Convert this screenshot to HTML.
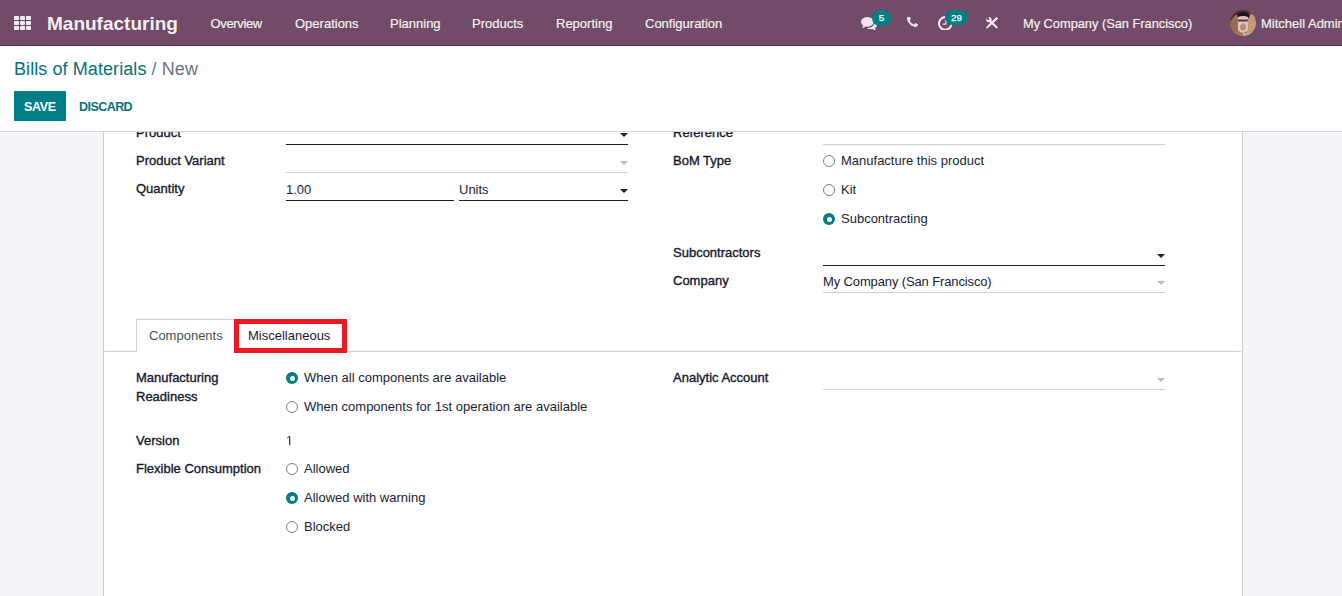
<!DOCTYPE html>
<html><head><meta charset="utf-8">
<style>
html,body{margin:0;padding:0;width:1342px;height:596px;overflow:hidden;background:#fff;}
body{position:relative;font-family:"Liberation Sans",sans-serif;font-size:13px;color:#1a1c34;}
.t{position:absolute;line-height:13px;white-space:nowrap;font-size:13px;}
.b{color:#15172e;font-weight:400;-webkit-text-stroke:0.35px currentColor;}
#nav{position:absolute;left:0;top:0;width:1342px;height:45px;background:#714b67;border-bottom:1px solid #4f2d46;}
#nav .t{color:#f3eff2;-webkit-text-stroke:0.2px #f3eff2;}
.badge{position:absolute;background:#017e84;color:#fff;font-weight:400;-webkit-text-stroke:0.25px #fff;font-size:9.8px;line-height:15px;text-align:center;border-radius:8px;}
#cp{position:absolute;left:0;top:46px;width:1342px;height:85px;background:#fff;border-bottom:1px solid #cfd1d6;}
#bg{position:absolute;left:0;top:132px;width:1342px;height:464px;background:#f4f5f9;}
#sheet{position:absolute;left:103px;top:132px;width:1138px;height:470px;background:#fff;border-left:1px solid #cbced4;border-right:1px solid #cbced4;}
.ul{position:absolute;height:1px;background:#1b1d2c;}
.ulg{position:absolute;height:1px;background:#d0d0d2;}
.caret{position:absolute;width:0;height:0;border-left:4px solid transparent;border-right:4px solid transparent;border-top:4px solid #1b1d2c;}
.caretg{border-top-color:#b9b9bb;}
.radio{position:absolute;width:10px;height:10px;border:1px solid #7a7f85;border-radius:50%;background:#fff;}
.radio.on{border:none;width:12px;height:12px;background:#017e84;}
.radio.on:after{content:"";position:absolute;left:3.5px;top:3.5px;width:5px;height:5px;border-radius:50%;background:#fff;}
</style></head>
<body>
<!-- NAVBAR -->
<div id="nav">
  <svg style="position:absolute;left:14px;top:16px" width="18" height="15" viewBox="0 0 18 15">
    <g fill="#f1ecf0">
      <rect x="0" y="0" width="5" height="4" rx="0.8"/><rect x="6" y="0" width="5" height="4" rx="0.8"/><rect x="12" y="0" width="5" height="4" rx="0.8"/>
      <rect x="0" y="5" width="5" height="4" rx="0.8"/><rect x="6" y="5" width="5" height="4" rx="0.8"/><rect x="12" y="5" width="5" height="4" rx="0.8"/>
      <rect x="0" y="10" width="5" height="4" rx="0.8"/><rect x="6" y="10" width="5" height="4" rx="0.8"/><rect x="12" y="10" width="5" height="4" rx="0.8"/>
    </g>
  </svg>
  <span class="t" style="left:47px;top:13.5px;font-size:19px;line-height:19px;font-weight:700;-webkit-text-stroke:0;">Manufacturing</span>
  <span class="t" style="left:210.5px;top:17px;letter-spacing:-0.35px;">Overview</span>
  <span class="t" style="left:295px;top:17px;">Operations</span>
  <span class="t" style="left:390px;top:17px;">Planning</span>
  <span class="t" style="left:472px;top:17px;">Products</span>
  <span class="t" style="left:556px;top:17px;">Reporting</span>
  <span class="t" style="left:645px;top:17px;">Configuration</span>

  <!-- chat icon -->
  <svg style="position:absolute;left:860.6px;top:16.7px" width="16.2" height="13.4" viewBox="0 256 1792 1408" preserveAspectRatio="none">
    <path fill="#ece7eb" d="M1408 768q0 139-94 257t-256.5 186.5-353.5 68.5q-86 0-176-16-124 88-278 128-36 9-86 16h-3q-11 0-20.5-8t-11.5-21q-1-3-1-6.5t.5-6.5 2-6l2.5-5 3.5-5.5 4-5 4.5-5 4-4.5q5-6 23-25t26-29.5 22.5-29 25-38.5 20.5-44q-124-72-195-177t-71-224q0-139 94-257t256.5-186.5 353.5-68.5 353.5 68.5 256.5 186.5 94 257zm384 256q0 120-71 224.5t-195 176.5q10 24 20.5 44t25 38.5 22.5 29 26 29.5 23 25q1 1 4 4.5t4.5 5 4 5 3.5 5.5l2.5 5 2 6 .5 6.5-1 6.5q-3 14-13 22t-22 7q-50-7-86-16-154-40-278-128-90 16-176 16-271 0-472-132 58 4 88 4 161 0 309-45t264-129q125-92 192-212t67-254q0-77-23-152 129 71 204 178t75 230z"/>
  </svg>
  <div class="badge" style="left:872px;top:10px;width:19px;height:16px;line-height:16px;">5</div>

  <!-- phone -->
  <svg id="phone" style="position:absolute;left:906.8px;top:17px" width="11" height="11" viewBox="0 256 1408 1408" preserveAspectRatio="none">
    <path fill="#ece7eb" d="M1408 1240q0 27-10 70.5t-21 68.5q-21 50-122 106-94 51-186 51-27 0-53-3.5t-57.5-12.5-47-14.5-55.5-20.5-49-18q-98-35-175-83-127-79-264-216t-216-264q-48-77-83-175-3-9-18-49t-20.5-55.5-14.5-47-12.5-57.5-3.5-53q0-92 51-186 56-101 106-122 25-11 68.5-21t70.5-10q14 0 21 3 18 6 53 76 11 19 30 54t35 63.5 31 53.5q3 4 17.5 25t21.5 35.5 7 28.5q0 20-28.5 50t-62 55-62 53-28.5 46q0 9 5 22.5t8.5 20.5 14 24 11.5 19q76 137 174 235t235 174q2 1 19 11.5t24 14 20.5 8.5 22.5 5q18 0 46-28.5t53-62 55-62 50-28.5q14 0 28.5 7t35.5 21.5 25 17.5q25 15 53.5 31t63.5 35 54 30q70 35 76 53 3 7 3 21z"/>
  </svg>

  <!-- clock -->
  <svg id="clock" style="position:absolute;left:938px;top:15.6px" width="14.5" height="14.9" viewBox="0 0 1536 1536" preserveAspectRatio="none">
    <path fill="#ece7eb" transform="translate(0,-96)" d="M896 520v448q0 14-9 23t-23 9h-320q-14 0-23-9t-9-23v-64q0-14 9-23t23-9h224v-352q0-14 9-23t23-9h64q14 0 23 9t9 23zm416 352q0-148-73-273t-198-198-273-73-273 73-198 198-73 273 73 273 198 198 273 73 273-73 198-198 73-273zm224 0q0 209-103 385.5t-279.5 279.5-385.5 103-385.5-103-279.5-279.5-103-385.5 103-385.5 279.5-279.5 385.5-103 385.5 103 279.5 279.5 103 385.5z"/>
  </svg>
  <div class="badge" style="left:945px;top:10px;width:23px;height:15px;">29</div>

  <!-- tools -->
  <svg style="position:absolute;left:985px;top:16px" width="14" height="14" viewBox="0 0 14 14">
    <defs><mask id="wm"><rect width="14" height="14" fill="#fff"/><circle cx="3.3" cy="3.0" r="1.15" fill="#000"/><rect x="2.2" y="-2" width="2.2" height="5" fill="#000" transform="rotate(-45 3.3 3.0)"/></mask></defs>
    <g fill="#f3eff2">
      <g mask="url(#wm)"><circle cx="3.9" cy="3.6" r="2.7"/></g>
      <path d="M4.6 6.2L6.2 4.6L12.9 11.2L11.6 12.5z"/>
      <path d="M13.2 2.6L11.4 0.9L1.8 10.4L0.8 12.7L3.1 11.8z"/>
    </g>
  </svg>

  <span class="t" style="left:1023px;top:17px;font-size:12.8px;">My Company (San Francisco)</span>

  <!-- avatar -->
  <svg style="position:absolute;left:1230px;top:10px" width="26" height="26" viewBox="0 0 26 26">
    <defs><clipPath id="cc"><circle cx="13" cy="13" r="13"/></clipPath><filter id="bl" x="-10%" y="-10%" width="120%" height="120%"><feGaussianBlur stdDeviation="0.5"/></filter></defs>
    <g clip-path="url(#cc)"><g filter="url(#bl)">
      <rect width="26" height="26" fill="#a47656"/>
      <rect x="17" y="5" width="9" height="21" fill="#c29a7a"/>
      <rect x="0" y="8" width="7" height="14" fill="#9a6a4e"/>
      <path d="M0 0H26V6Q20 2 13 3 6 3 2 9L0 12z" fill="#5b2624"/>
      <path d="M7 4Q13 0 20 4L19 8Q13 5 8 8z" fill="#1e1420"/>
      <path d="M8 7Q13 5 18 7L18 20Q13 26 8 20z" fill="#dcc4bc"/>
      <rect x="8" y="9.5" width="10" height="2" fill="#5a3a3e"/>
      <ellipse cx="13" cy="17" rx="3" ry="3.5" fill="#b98d78"/>
      <rect x="13" y="23" width="8" height="4" fill="#a9b0b8"/>
    </g></g>
  </svg>
  <span class="t" style="left:1261px;top:17px;">Mitchell Admin</span>
</div>

<!-- CONTROL PANEL -->
<div id="cp">
  <span class="t" style="left:14px;top:14px;font-size:18px;line-height:18px;color:#04717a;letter-spacing:0.08px;">Bills of Materials<span style="color:#6c757d"> / New</span></span>
  <div style="position:absolute;left:14px;top:45px;width:52px;height:30px;background:#017e84;"></div>
  <span class="t" style="left:24px;top:55px;color:#fff;font-size:12.5px;font-weight:700;letter-spacing:-0.3px;">SAVE</span>
  <span class="t" style="left:79px;top:55px;color:#03737b;font-size:12.5px;font-weight:700;letter-spacing:-0.55px;">DISCARD</span>
</div>

<!-- BACKGROUND + SHEET -->
<div id="bg"></div>
<div id="sheet"></div>

<!-- content clip -->
<div style="position:absolute;left:0;top:132px;width:1342px;height:464px;overflow:hidden;">
 <div style="position:absolute;left:0;top:-132px;width:1342px;height:596px;">
  <!-- left group -->
  <span class="t b" style="left:136px;top:126px;">Product</span>
  <div class="ul" style="left:286px;top:144px;width:342px;"></div>
  <div class="caret" style="left:620px;top:133px;"></div>

  <span class="t b" style="left:136px;top:154px;">Product Variant</span>
  <div class="ulg" style="left:286px;top:172px;width:342px;"></div>
  <div class="caret caretg" style="left:620px;top:161px;"></div>

  <span class="t b" style="left:136px;top:182px;">Quantity</span>
  <span class="t" style="left:286px;top:183px;">1.00</span>
  <div class="ul" style="left:286px;top:200px;width:168px;"></div>
  <span class="t" style="left:459px;top:183px;">Units</span>
  <div class="ul" style="left:459px;top:200px;width:169px;"></div>
  <div class="caret" style="left:620px;top:189px;"></div>

  <!-- right group -->
  <span class="t b" style="left:673px;top:126px;">Reference</span>
  <div class="ulg" style="left:823px;top:144px;width:342px;"></div>

  <span class="t b" style="left:673px;top:154px;">BoM Type</span>
  <div class="radio" style="left:823px;top:155px;"></div>
  <span class="t" style="left:841px;top:154px;">Manufacture this product</span>
  <div class="radio" style="left:823px;top:184px;"></div>
  <span class="t" style="left:841px;top:183px;">Kit</span>
  <div class="radio on" style="left:823px;top:213px;"></div>
  <span class="t" style="left:841px;top:212px;">Subcontracting</span>

  <span class="t b" style="left:673px;top:246px;">Subcontractors</span>
  <div class="ul" style="left:823px;top:265px;width:342px;"></div>
  <div class="caret" style="left:1157px;top:254px;"></div>

  <span class="t b" style="left:673px;top:274px;">Company</span>
  <span class="t" style="left:823px;top:275px;letter-spacing:-0.13px;">My Company (San Francisco)</span>
  <div class="ulg" style="left:823px;top:292px;width:342px;"></div>
  <div class="caret caretg" style="left:1157px;top:281px;"></div>

  <!-- tabs -->
  <div style="position:absolute;left:104px;top:351px;width:1137px;height:1px;background:#cfd1d6;"></div>
  <div style="position:absolute;left:136px;top:319px;width:120px;height:33px;box-sizing:border-box;border:1px solid #cfd1d6;border-bottom:none;background:#fff;"></div>
  <span class="t" style="left:149px;top:329px;color:#495057;">Components</span>
  <div style="position:absolute;left:234px;top:319px;width:113px;height:34px;box-sizing:border-box;border:5px solid #ea1a23;background:#fff;"></div>
  <span class="t" style="left:248px;top:329px;">Miscellaneous</span>

  <!-- misc page -->
  <span class="t b" style="left:136px;top:371px;">Manufacturing</span>
  <span class="t b" style="left:136px;top:390px;">Readiness</span>
  <div class="radio on" style="left:286px;top:372px;"></div>
  <span class="t" style="left:304px;top:371px;">When all components are available</span>
  <div class="radio" style="left:286px;top:401px;"></div>
  <span class="t" style="left:304px;top:400px;">When components for 1st operation are available</span>

  <span class="t b" style="left:136px;top:434px;">Version</span>
  <svg style="position:absolute;left:286px;top:435px" width="7" height="11" viewBox="0 0 7 11"><path d="M3.7 1.2V10.2" stroke="#2f2844" stroke-width="1.2"/><path d="M1.2 3.0L3.9 1.2" stroke="#2f2844" stroke-width="1"/></svg>

  <span class="t b" style="left:136px;top:462px;">Flexible Consumption</span>
  <div class="radio" style="left:286px;top:463px;"></div>
  <span class="t" style="left:304px;top:462px;">Allowed</span>
  <div class="radio on" style="left:286px;top:492px;"></div>
  <span class="t" style="left:304px;top:491px;">Allowed with warning</span>
  <div class="radio" style="left:286px;top:521px;"></div>
  <span class="t" style="left:304px;top:520px;">Blocked</span>

  <span class="t b" style="left:673px;top:371px;">Analytic Account</span>
  <div class="ulg" style="left:823px;top:389px;width:342px;"></div>
  <div class="caret caretg" style="left:1157px;top:378px;"></div>
 </div>
</div>
</body></html>
